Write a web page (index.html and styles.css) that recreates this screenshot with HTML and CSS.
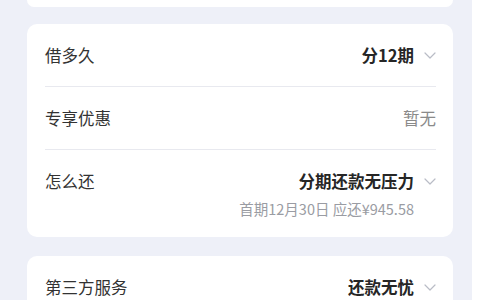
FILE: index.html
```html
<!DOCTYPE html>
<html lang="zh-CN">
<head>
<meta charset="utf-8">
<title>借款</title>
<link rel="stylesheet" href="styles.css">
</head>
<body>
<div class="page">
  <div class="card card-top"></div>

  <div class="card card-main">
    <div class="row">
      <span class="label">借多久</span>
      <span class="value">
        <span class="value-text">分12期</span>
        <svg class="chev" viewBox="0 0 12 7" width="12" height="7"><path d="M1 1 L6 6 L11 1" fill="none" stroke="#b9bcc6" stroke-width="1.2" stroke-linecap="round" stroke-linejoin="round"/></svg>
      </span>
    </div>
    <div class="row">
      <span class="label">专享优惠</span>
      <span class="muted">暂无</span>
    </div>
    <div class="row row-last">
      <div class="row-line">
        <span class="label">怎么还</span>
        <span class="value">
          <span class="value-text">分期还款无压力</span>
          <svg class="chev" viewBox="0 0 12 7" width="12" height="7"><path d="M1 1 L6 6 L11 1" fill="none" stroke="#b9bcc6" stroke-width="1.2" stroke-linecap="round" stroke-linejoin="round"/></svg>
        </span>
      </div>
      <div class="sub">首期12月30日 应还¥945.58</div>
    </div>
  </div>

  <div class="card card-main">
    <div class="row">
      <span class="label">第三方服务</span>
      <span class="value">
        <span class="value-text">还款无忧</span>
        <svg class="chev" viewBox="0 0 12 7" width="12" height="7"><path d="M1 1 L6 6 L11 1" fill="none" stroke="#b9bcc6" stroke-width="1.2" stroke-linecap="round" stroke-linejoin="round"/></svg>
      </span>
    </div>
  </div>
</div>
</body>
</html>
```

FILE: styles.css
```css
html, body {
  margin: 0;
  padding: 0;
  background: #ffffff;
  height: 300px;
  overflow: hidden;
}
.page {
  width: 472px;
  height: 300px;
  overflow: hidden;
  box-sizing: border-box;
  background: #eef0f8;
  padding: 0 19px 0 27px;
  font-family: "Noto Sans CJK SC", "Noto Sans", sans-serif;
  display: flex;
  flex-direction: column;
}
.card {
  background: #ffffff;
  border-radius: 10px;
}
.card-top {
  height: 7px;
  border-radius: 0 0 10px 10px;
  flex: none;
}
.card-main {
  margin-top: 17px;
  padding: 0 17px 0 18px;
  flex: none;
}
.card-main + .card-main {
  margin-top: 19px;
}
.row {
  height: 62px;
  border-bottom: 1px solid #e8e9ef;
  display: flex;
  align-items: center;
  justify-content: space-between;
}
.row-last {
  height: auto;
  border-bottom: none;
  display: block;
  padding: 19px 0 19px;
}
.row-line {
  height: 24px;
  display: flex;
  align-items: center;
  justify-content: space-between;
}
.label {
  font-size: 16.5px;
  line-height: 24px;
  color: #333333;
}
.value {
  display: flex;
  align-items: center;
  gap: 10px;
}
.value-text {
  font-size: 16.5px;
  line-height: 24px;
  font-weight: 700;
  color: #262626;
}
.chev {
  display: block;
  width: 12px;
  height: 7px;
}
.muted {
  font-size: 16.5px;
  line-height: 24px;
  color: #8a8a8a;
}
.sub {
  margin-top: 7px;
  font-size: 14.5px;
  line-height: 18px;
  color: #9a9ca3;
  text-align: right;
  padding-right: 22px;
}
```
